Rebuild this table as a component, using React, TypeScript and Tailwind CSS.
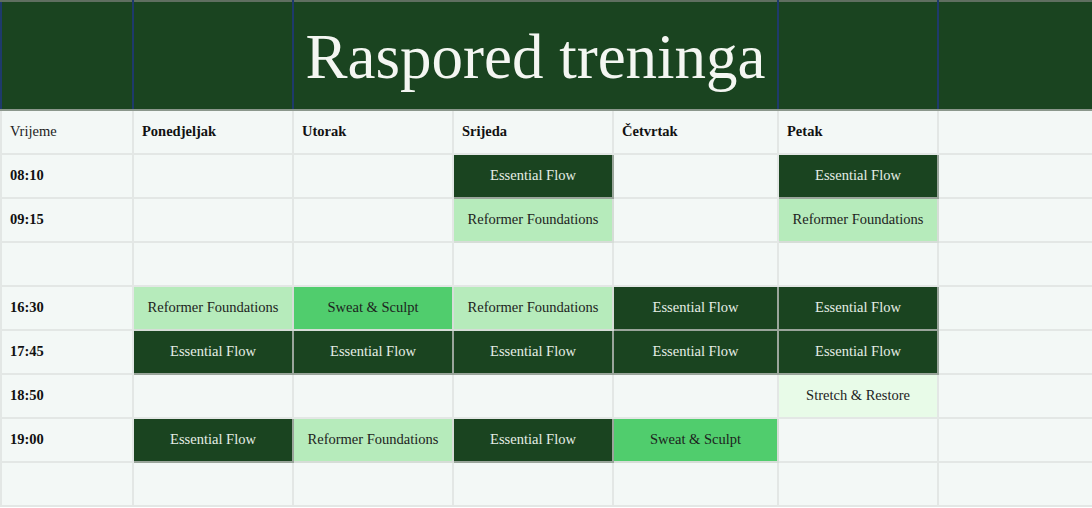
import React from "react";

type Kind = "ef" | "rf" | "ss" | "sr" | "";

const days = ["Ponedjeljak", "Utorak", "Srijeda", "Četvrtak", "Petak", ""];

const rows: { time: string; cells: Kind[] }[] = [
	{ time: "08:10", cells: ["", "", "ef", "", "ef", ""] },
	{ time: "09:15", cells: ["", "", "rf", "", "rf", ""] },
	{ time: "", cells: ["", "", "", "", "", ""] },
	{ time: "16:30", cells: ["rf", "ss", "rf", "ef", "ef", ""] },
	{ time: "17:45", cells: ["ef", "ef", "ef", "ef", "ef", ""] },
	{ time: "18:50", cells: ["", "", "", "", "sr", ""] },
	{ time: "19:00", cells: ["ef", "rf", "ef", "ss", "", ""] },
	{ time: "", cells: ["", "", "", "", "", ""] },
];

const label: Record<Kind, string> = {
	ef: "Essential Flow",
	rf: "Reformer Foundations",
	ss: "Sweat & Sculpt",
	sr: "Stretch & Restore",
	"": "",
};

const style: Record<Kind, string> = {
	ef: "bg-[#1a4420] text-[#e6eee6] border-[#9aa59b]",
	rf: "bg-[#b6ebbb] text-[#1d231d] border-[#d6ddd7]",
	ss: "bg-[#50cd6d] text-[#1d231d] border-[#d6ddd7]",
	sr: "bg-[#e8fbe8] text-[#1d231d] border-[#e3e7e5]",
	"": "bg-[#f3f8f6] border-[#e3e7e5]",
};

export default function App() {
	return (
		<div className="w-[1092px] h-[508px] bg-white font-['Liberation_Serif',serif]">
			<table className="w-[1092px] border-collapse table-fixed">
				<colgroup>
					<col className="w-[132px]" />
					<col className="w-[160px]" />
					<col className="w-[160px]" />
					<col className="w-[160px]" />
					<col className="w-[165px]" />
					<col className="w-[160px]" />
					<col className="w-[155px]" />
				</colgroup>
				<thead>
					<tr className="h-[109px] bg-[#1a4420]">
						<th className="border-2 border-[#1e3a6b] border-y-[#5f6f60] border-b-[#8b978c]"></th>
						<th className="border-2 border-[#1e3a6b] border-y-[#5f6f60] border-b-[#8b978c]"></th>
						<th colSpan={3} className="border-2 border-[#1e3a6b] border-y-[#5f6f60] border-b-[#8b978c] text-center text-[#f4f6f2] text-[63px] font-normal leading-none pt-1">
							Raspored treninga
						</th>
						<th className="border-2 border-[#1e3a6b] border-y-[#5f6f60] border-b-[#8b978c]"></th>
						<th className="border-2 border-[#1e3a6b] border-y-[#5f6f60] border-b-[#8b978c]"></th>
					</tr>
					<tr className="h-[44px] bg-[#f3f8f6]">
						<th className="border-2 border-[#e3e7e5] text-left px-2 text-[14.5px] font-normal text-[#1d1d1d]">Vrijeme</th>
						{days.map((d, i) => (
							<th key={i} className="border-2 border-[#e3e7e5] text-left px-2 text-[14.5px] font-bold text-[#111]">
								{d}
							</th>
						))}
					</tr>
				</thead>
				<tbody>
					{rows.map((r, ri) => (
						<tr key={ri} className="h-[44px]">
							<td className="border-2 border-[#e3e7e5] bg-[#f3f8f6] px-2 text-[14.5px] font-bold text-[#111]">{r.time}</td>
							{r.cells.map((c, ci) => (
								<td key={ci} className={`border-2 text-center text-[14.5px] ${style[c]}`}>
									{label[c]}
								</td>
							))}
						</tr>
					))}
				</tbody>
			</table>
		</div>
	);
}
